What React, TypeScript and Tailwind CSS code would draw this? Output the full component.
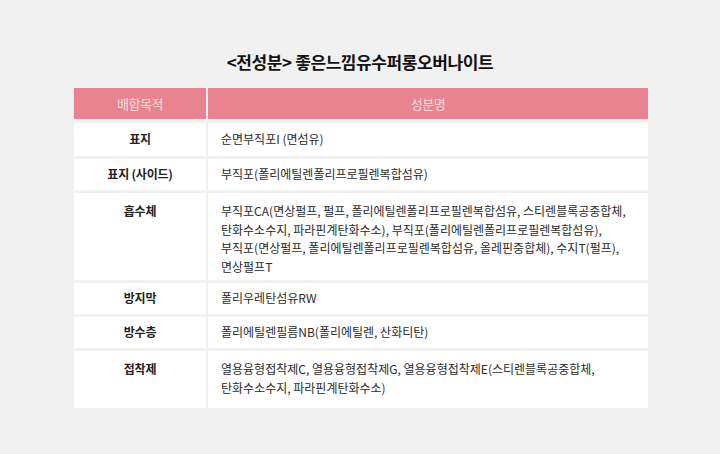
const rows: { label: string; lines: string[]; pad: string }[] = [
  { label: "표지", lines: ["순면부직포I (면섬유)"], pad: "h-[33px]" },
  { label: "표지 (사이드)", lines: ["부직포(폴리에틸렌폴리프로필렌복합섬유)"], pad: "h-[31px]" },
  {
    label: "흡수체",
    lines: [
      "부직포CA(면상펄프, 펄프, 폴리에틸렌폴리프로필렌복합섬유, 스티렌블록공중합체,",
      "탄화수소수지, 파라핀계탄화수소), 부직포(폴리에틸렌폴리프로필렌복합섬유),",
      "부직포(면상펄프, 폴리에틸렌폴리프로필렌복합섬유, 올레핀중합체), 수지T(펄프),",
      "면상펄프T",
    ],
    pad: "pt-[9px] pb-[4px]",
  },
  { label: "방지막", lines: ["폴리우레탄섬유RW"], pad: "h-[31px]" },
  { label: "방수층", lines: ["폴리에틸렌필름NB(폴리에틸렌, 산화티탄)"], pad: "h-[31px]" },
  {
    label: "접착제",
    lines: [
      "열용융형접착제C, 열용융형접착제G, 열용융형접착제E(스티렌블록공중합체,",
      "탄화수소수지, 파라핀계탄화수소)",
    ],
    pad: "pt-[9px] pb-[11px]",
  },
];

export default function App() {
  return (
    <div
      className="w-[720px] h-[454px] bg-[#f1f1f1] overflow-hidden flex flex-col"
      style={{ fontFamily: '"Noto Sans CJK KR", "Noto Sans", sans-serif' }}
    >
      <h1 className="pt-[49px] text-center text-[17px] leading-[26px] font-bold text-[#111] tracking-[-0.4px]">
        <span className="font-semibold">&lt;전성분&gt;</span> 좋은느낌유수퍼롱오버나이트
      </h1>

      <div className="ml-[74px] mt-[13px] w-[574px] grid grid-cols-[132px_440px] gap-x-[2px] gap-y-[3px]">
        {/* Header */}
        <div className="h-[31px] mb-[1px] bg-[#e8838f] flex items-center justify-center text-[13px] text-[#f9dce0] tracking-[-0.4px]">
          배합목적
        </div>
        <div className="h-[31px] mb-[1px] bg-[#e8838f] flex items-center justify-center text-[13px] text-[#f9dce0] tracking-[-0.4px]">
          성분명
        </div>

        {rows.map((r) => {
          const multi = r.lines.length > 1;
          return [
            <div
              key={r.label + "-l"}
              className={`bg-white flex justify-center text-[12px] leading-[18.5px] font-bold text-[#222] tracking-[-0.2px] ${
                multi ? r.pad + " items-start" : r.pad + " items-center"
              }`}
            >
              {r.label}
            </div>,
            <div
              key={r.label + "-r"}
              className={`bg-white pl-[13px] flex flex-col text-[12px] leading-[18.5px] text-[#2b2b2b] tracking-[0px] ${
                multi ? r.pad + " justify-start" : r.pad + " justify-center"
              }`}
            >
              {r.lines.map((l) => (
                <div key={l} className="whitespace-nowrap">
                  {l}
                </div>
              ))}
            </div>,
          ];
        })}
      </div>
    </div>
  );
}
